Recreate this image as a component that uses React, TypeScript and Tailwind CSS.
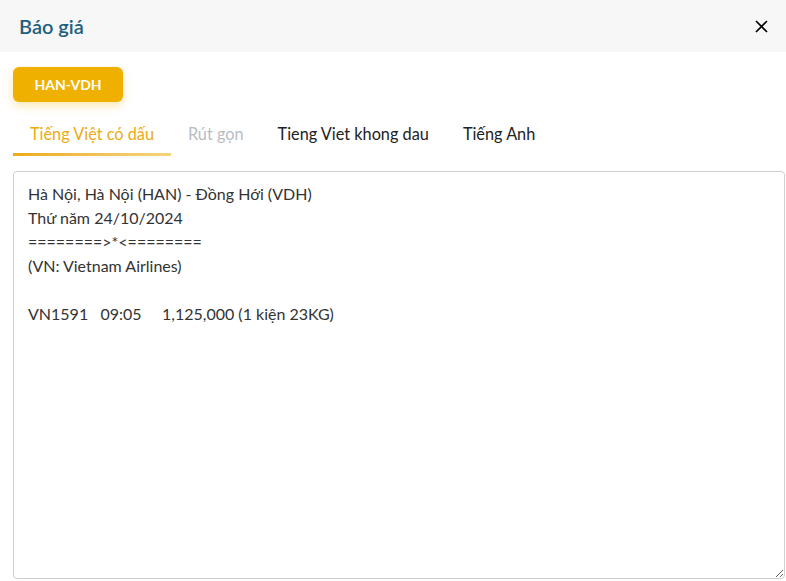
import { useState } from "react";

const tabs = ["Tiếng Việt có dấu", "Rút gọn", "Tieng Viet khong dau", "Tiếng Anh"];

const content = `Hà Nội, Hà Nội (HAN) - Đồng Hới (VDH)
Thứ năm 24/10/2024
========>*<========
(VN: Vietnam Airlines)

VN1591   09:05     1,125,000 (1 kiện 23KG)`;

export default function App() {
  const [active, setActive] = useState(0);

  return (
    <div className="w-[786px] h-[581px] bg-white overflow-hidden font-['Lato','Liberation_Sans',sans-serif]">
      {/* HEADER */}
      <div className="h-[52px] bg-[#f7f7f7] flex items-center justify-between pl-[19px] pr-[18px]">
        <h2 className="text-[20px] font-semibold text-[#1d5f7e]">Báo giá</h2>
        <button className="w-[14px] h-[14px] flex items-center justify-center text-black">
          <svg width="13" height="13" viewBox="0 0 13 13">
            <path d="M1 1L12 12M12 1L1 12" stroke="currentColor" strokeWidth="1.7" />
          </svg>
        </button>
      </div>

      <div className="px-[13px] pt-[15px]">
        <button className="w-[110px] h-[35px] rounded-md bg-[#f0b000] text-white text-[14px] font-bold shadow-[0_4px_10px_rgba(240,176,0,0.3)]">
          HAN-VDH
        </button>

        {/* TABS */}
        <div className="flex mt-[12px] h-[40px]">
          {tabs.map((t, i) => (
            <button
              key={t}
              onClick={() => setActive(i)}
              className={`relative px-[17px] text-[16.3px] leading-[40px] ${
                i === active ? "text-[#eeaa11]" : i === 1 ? "text-[#b9bcc4]" : "text-[#222]"
              }`}
            >
              {t}
              {i === active && (
                <span className="absolute left-0 right-0 bottom-[-2px] h-[3px] bg-gradient-to-r from-[#eeab13] to-[#f3d57a]" />
              )}
            </button>
          ))}
        </div>

        {/* TEXT */}
        <textarea
          defaultValue={content}
          className="mt-[17px] w-[772px] h-[408px] block border border-[#cfcfcf] rounded-[4px] px-[14px] pt-[10px] text-[16px] leading-[24px] text-[#333] outline-none font-['Lato','Liberation_Sans',sans-serif]"
        />
      </div>
    </div>
  );
}
